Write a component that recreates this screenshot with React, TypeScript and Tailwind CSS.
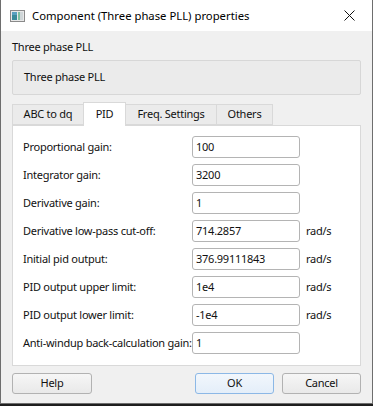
import React from "react";

const rows: { label: string; value: string; unit?: string }[] = [
  { label: "Proportional gain:", value: "100" },
  { label: "Integrator gain:", value: "3200" },
  { label: "Derivative gain:", value: "1" },
  { label: "Derivative low-pass cut-off:", value: "714.2857", unit: "rad/s" },
  { label: "Initial pid output:", value: "376.99111843", unit: "rad/s" },
  { label: "PID output upper limit:", value: "1e4", unit: "rad/s" },
  { label: "PID output lower limit:", value: "-1e4", unit: "rad/s" },
  { label: "Anti-windup back-calculation gain:", value: "1" },
];

const tabs = ["ABC to dq", "PID", "Freq. Settings", "Others"];
const tabWidths = ["w-[72px]", "w-[43px]", "w-[92px]", "w-[57px]"];

export default function App() {
  return (
    <div
      className="w-[373px] h-[406px] bg-[#1e1e1e] text-[#111] text-[11px] tracking-[-0.25px]"
      style={{ fontFamily: '"Noto Sans", sans-serif' }}
    >
      <div className="w-[373px] h-[404px] border-x border-b border-[#6e6e6e] bg-[#f0f0f0] flex flex-col">
        {/* Title bar */}
        <div className="h-[31px] bg-white flex items-center shrink-0">
          <svg width="15" height="12" viewBox="0 0 15 12" className="ml-[9px]">
            <rect x="0.5" y="0.5" width="14" height="11" fill="#e8e8e8" stroke="#8a8a8a" />
            <rect x="2" y="2" width="5" height="8" fill="#3a8a9a" />
            <rect x="2" y="2" width="5" height="3" fill="#5aa0c0" />
            <rect x="8" y="2" width="5" height="8" fill="#cfd6d8" />
            <rect x="8" y="2" width="2" height="8" fill="#7ec0a0" />
          </svg>
          <span className="ml-[7px] text-[11.3px] tracking-[0px] leading-none whitespace-nowrap text-black">Component (Three phase PLL) properties</span>
          <svg width="11" height="11" viewBox="0 0 11 11" className="ml-auto mr-[17px]">
            <path d="M0.5 0.5 L10.5 10.5 M10.5 0.5 L0.5 10.5" stroke="#111" strokeWidth="1" />
          </svg>
        </div>

        {/* Body */}
        <div className="flex flex-col px-[11px]">
          <div className="pt-[8px] h-[24px] leading-[16px]">Three phase PLL</div>
          <div className="mt-[5px] h-[35px] border border-[#d7d7d7] bg-[#ebebeb] rounded-[2px] flex items-center pl-[11px]">
            Three phase PLL
          </div>

          {/* Tabs */}
          <div className="mt-[7px] h-[23px] flex items-end">
            {tabs.map((t, i) =>
              i === 1 ? (
                <div
                  key={t}
                  className={`${tabWidths[i]} h-[24px] -mb-px bg-white border border-b-0 border-[#d9d9d9] flex items-center justify-center relative z-10 -ml-px`}
                >
                  {t}
                </div>
              ) : (
                <div
                  key={t}
                  className={`${tabWidths[i]} h-[21px] bg-[#ebebeb] border border-[#d9d9d9] flex items-center justify-center ${i > 0 ? "-ml-px" : ""}`}
                >
                  {t}
                </div>
              )
            )}
          </div>

          {/* Pane */}
          <div className="h-[241px] bg-white border border-[#d9d9d9] pt-[10px] pl-[10px] flex flex-col gap-[6px]">
            {rows.map((r) => (
              <div key={r.label} className="flex items-center h-[22px]">
                <div className="w-[169px] shrink-0 whitespace-nowrap">{r.label}</div>
                <div className="w-[108px] h-[22px] border border-[#b4b4b4] rounded-[3px] bg-white flex items-center pl-[3px]">
                  {r.value}
                </div>
                {r.unit && <div className="ml-[6px]">{r.unit}</div>}
              </div>
            ))}
          </div>

          {/* Buttons */}
          <div className="mt-[7px] flex items-center">
            <button className="w-[80px] h-[21px] border border-[#b2b2b2] rounded-[3px] bg-gradient-to-b from-[#f6f6f6] to-[#e9e9e9] flex items-center justify-center">
              Help
            </button>
            <button className="ml-auto w-[79px] h-[21px] border border-[#8cb8e6] rounded-[3px] bg-gradient-to-b from-[#f2f7fc] to-[#e4eef9] flex items-center justify-center">
              OK
            </button>
            <button className="ml-[8px] w-[79px] h-[21px] border border-[#b2b2b2] rounded-[3px] bg-gradient-to-b from-[#f6f6f6] to-[#e9e9e9] flex items-center justify-center">
              Cancel
            </button>
          </div>
        </div>
      </div>
    </div>
  );
}
